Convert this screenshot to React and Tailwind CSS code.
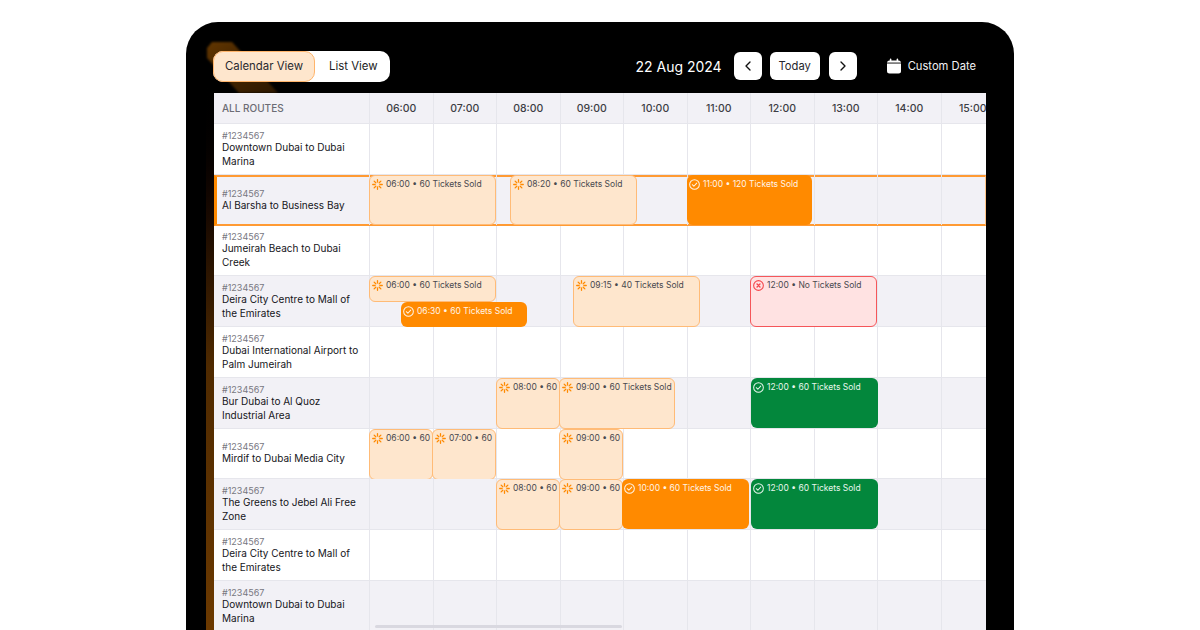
import React from "react";
import { ChevronLeft, ChevronRight } from "lucide-react";

const HOURS = ["06:00","07:00","08:00","09:00","10:00","11:00","12:00","13:00","14:00","15:00"];
const ROUTES = [
  ["Downtown Dubai to Dubai Marina", []],
  ["Al Barsha to Business Bay", [
    ["p",0,127,0,50,"06:00","60 Tickets Sold"],
    ["p",141,127,0,50,"08:20","60 Tickets Sold"],
    ["o",318,125,0,50,"11:00","120 Tickets Sold"],
  ]],
  ["Jumeirah Beach to Dubai Creek", []],
  ["Deira City Centre to Mall of the Emirates", [
    ["p",0,127,0,26,"06:00","60 Tickets Sold"],
    ["o",32,126,26,25,"06:30","60 Tickets Sold"],
    ["p",204,127,0,51,"09:15","40 Tickets Sold"],
    ["r",381,127,0,51,"12:00","No Tickets Sold"],
  ]],
  ["Dubai International Airport to Palm Jumeirah", []],
  ["Bur Dubai to Al Quoz Industrial Area", [
    ["p",127,64,0,51,"08:00","60"],
    ["p",190,116,0,51,"09:00","60 Tickets Sold"],
    ["g",382,127,0,50,"12:00","60 Tickets Sold"],
  ]],
  ["Mirdif to Dubai Media City", [
    ["p",0,64,0,51,"06:00","60"],
    ["p",63,64,0,51,"07:00","60"],
    ["p",190,64,0,51,"09:00","60"],
  ]],
  ["The Greens to Jebel Ali Free Zone", [
    ["p",127,64,0,51,"08:00","60"],
    ["p",190,64,0,51,"09:00","60"],
    ["o",253,127,0,50,"10:00","60 Tickets Sold"],
    ["g",382,127,0,50,"12:00","60 Tickets Sold"],
  ]],
  ["Deira City Centre to Mall of the Emirates", []],
  ["Downtown Dubai to Dubai Marina", []],
];

const STYLES = {
  p: "bg-[#fee6cd] border border-[#ffbb77] text-[#49494f] pt-[2px]",
  o: "bg-[#ff8a00] text-[#fff4e6] pt-[3px]",
  g: "bg-[#03873c] text-[#e8f6ed] pt-[3px]",
  r: "bg-[#ffe2e2] border border-[#f5565a] text-[#49494f] pt-[2px]",
};

function Spinner() {
  const rays = [0, 45, 90, 135, 180, 225, 270, 315];
  return (
    <svg viewBox="0 0 12 12" className="w-[11px] h-[11px] shrink-0" fill="none" stroke="#ff8a00" strokeWidth="1.4" strokeLinecap="round">
      {rays.map((a) => (
        <line key={a} x1="6" y1="0.8" x2="6" y2="3.4" transform={`rotate(${a} 6 6)`} />
      ))}
    </svg>
  );
}

function Check() {
  return (
    <svg viewBox="0 0 12 12" className="w-[11px] h-[11px] shrink-0" fill="none" stroke="currentColor" strokeWidth="1.1" strokeLinecap="round" strokeLinejoin="round">
      <circle cx="6" cy="6" r="5.3" />
      <path d="M3.6 6.2 5.3 7.9 8.4 4.5" />
    </svg>
  );
}

function Cross() {
  return (
    <svg viewBox="0 0 12 12" className="w-[11px] h-[11px] shrink-0" fill="none" stroke="#f5484d" strokeWidth="1.2" strokeLinecap="round">
      <circle cx="6" cy="6" r="5.3" />
      <path d="M4.4 4.4 7.6 7.6M7.6 4.4 4.4 7.6" strokeWidth="1.5" />
    </svg>
  );
}

function Event({ e }) {
  const [kind, left, width, top, height, time, label] = e;
  return (
    <div
      className={`absolute overflow-hidden rounded-[6px] flex items-start pl-[2px] gap-[3px] whitespace-nowrap text-[8.5px] leading-[13px] ${STYLES[kind]}`}
      style={{ left, width, top, height }}
    >
      <span className="h-[13px] flex items-center">
        {kind === "p" ? <Spinner /> : kind === "r" ? <Cross /> : <Check />}
      </span>
      <span>{time} • {label}</span>
    </div>
  );
}

function Row({ route, index }) {
  const [name, events] = route;
  const shaded = index % 2 === 1;
  const selected = index === 1;
  return (
    <div className={`relative flex h-[50.75px] shrink-0 border-b border-[#e6e6ec] ${shaded ? "bg-[#f2f1f6]" : "bg-white"}`}>
      {selected && (
        <div className="absolute inset-0 -bottom-px border-y-2 border-r border-l-[3px] border-y-[#ff9a33] border-l-[#ff8a00] border-r-[#ffc58a] pointer-events-none" />
      )}
      <div className="w-[155px] shrink-0 pl-[8px] pr-[8px] pt-[1px] flex flex-col justify-center">
        <div className="text-[9px] leading-[9px] text-[#77777f]">#1234567</div>
        <div className="text-[10px] leading-[14px] text-[#15151a]">{name}</div>
      </div>
      <div className="flex flex-1 relative">
        {HOURS.map((h) => (
          <div key={h} className="w-[63.5px] shrink-0 border-l border-[#e6e6ec]" />
        ))}
        {events.map((e, i) => <Event key={i} e={e} />)}
      </div>
    </div>
  );
}

export default function App() {
  return (
    <div className="w-[1200px] h-[630px] bg-white overflow-hidden pt-[22px] pl-[186px] font-['Inter','Liberation_Sans',sans-serif]">
      <div className="relative w-[828px] h-[640px] bg-black rounded-t-[32px] overflow-hidden">
        {/* warm glow behind the toolbar and the panel */}
        <div className="absolute left-[20px] top-[50px] w-[8px] h-[590px] bg-linear-to-b from-black via-[#4f2a00] to-[#6f3b00]" />
        <div className="absolute inset-0 blur-[1px]">
          <div className="w-[100px] h-[72px] bg-linear-to-br from-[#7a4400] via-[#4a2800] to-[#2a1600] [clip-path:polygon(21px_26px,26px_20px,46px_20px,92px_71px,53px_71px,21px_36px)]" />
        </div>

        <div className="relative flex items-center h-[71px] pt-[18px] pl-[27px] pr-[38px]">
          <div className="flex items-center h-[31px] bg-white rounded-[10px]">
            <div className="h-full flex items-center px-[11px] pt-[1px] rounded-[10px] bg-[#fee6cd] border border-[#ffb46b] text-[11.4px] text-[#2a2a30]">Calendar View</div>
            <div className="h-full flex items-center pl-[14px] pr-[12px] pt-[1px] text-[11.4px] text-[#1c1c22]">List View</div>
          </div>
          <div className="ml-auto flex items-center mb-[1px]">
            <span className="text-white text-[14px] mr-[12px]">22 Aug 2024</span>
            <button className="w-[28px] h-[28px] bg-white rounded-[6px] flex items-center justify-center text-[#111]"><ChevronLeft size={16} strokeWidth={2} /></button>
            <button className="w-[50px] h-[28px] ml-[8px] bg-white rounded-[6px] text-[11.2px] text-[#26262c] flex items-center justify-center">Today</button>
            <button className="w-[28px] h-[28px] ml-[9px] bg-white rounded-[6px] flex items-center justify-center text-[#111]"><ChevronRight size={16} strokeWidth={2} /></button>
            <svg viewBox="0 0 16 16" className="w-[16px] h-[16px] ml-[29px]" fill="white">
              <rect x="1" y="2.5" width="14" height="13" rx="2.5" />
              <rect x="3.8" y="0.6" width="1.6" height="3.4" rx="0.8" />
              <rect x="10.6" y="0.6" width="1.6" height="3.4" rx="0.8" />
              <rect x="1" y="4.6" width="14" height="0.9" fill="black" />
            </svg>
            <span className="ml-[6px] text-[11.2px] text-[#f2f2f4]">Custom Date</span>
          </div>
        </div>

        <div className="relative ml-[28px] w-[772px] h-[537px] overflow-hidden bg-white flex flex-col">
          <div className="flex h-[31px] shrink-0 bg-[#f2f1f6] border-b border-[#e6e6ec]">
            <div className="w-[155px] shrink-0 pl-[8px] flex items-center text-[10px] font-medium text-[#6c6c74]">ALL ROUTES</div>
            {HOURS.map((h) => (
              <div key={h} className="w-[63.5px] shrink-0 border-l border-[#e6e6ec] flex items-center justify-center pt-[2px] text-[10.5px] font-medium text-[#3d3d44]">{h}</div>
            ))}
          </div>
          {ROUTES.map((r, i) => <Row key={i} route={r} index={i} />)}
          <div className="absolute left-[161px] top-[532px] w-[247px] h-[3px] rounded-full bg-[#d9d8e0]" />
        </div>
      </div>
    </div>
  );
}
